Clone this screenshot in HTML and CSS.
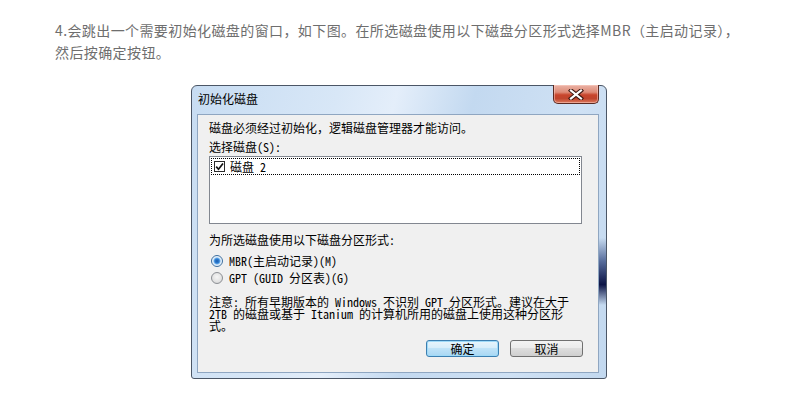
FILE: index.html
```html
<!DOCTYPE html>
<html>

<head>
    <meta charset="UTF-8">
    <link rel="stylesheet" href="styles.css">
</head>

<body>
    <div class="page">
        <p class="intro">4.会跳出一个需要初始化磁盘的窗口，如下图。在所选磁盘使用以下磁盘分区形式选择MBR（主启动记录），<br>然后按确定按钮。</p>

        <div class="window">
            <div class="titlebar">
                <span class="title">初始化磁盘</span>
                <span class="close">
                    <svg width="16" height="11" viewBox="0 0 16 11">
                        <path d="M3 1.5 L13 9.5 M13 1.5 L3 9.5" stroke="#3a1610" stroke-width="4.2" stroke-linecap="square" fill="none" />
                        <path d="M3 1.5 L13 9.5 M13 1.5 L3 9.5" stroke="#ffffff" stroke-width="2.2" stroke-linecap="square" fill="none" />
                    </svg>
                </span>
            </div>
            <div class="client">
                <p class="msg">磁盘必须经过初始化，逻辑磁盘管理器才能访问。</p>
                <p class="label">选择磁盘(S):</p>
                <div class="listbox">
                    <div class="list-item">
                        <span class="checkbox">
                            <svg width="9" height="9" viewBox="0 0 9 9">
                                <path d="M1.2 4.6 L3.5 7.2 L8 1.5" stroke="#111" stroke-width="1.7" fill="none" />
                            </svg>
                        </span>
                        <span class="item-text">磁盘 2</span>
                    </div>
                </div>
                <p class="label label-scheme">为所选磁盘使用以下磁盘分区形式:</p>
                <div class="radios">
                    <div class="radio-row"><span class="radio checked"></span>MBR(主启动记录)(M)</div>
                    <div class="radio-row"><span class="radio"></span>GPT (GUID 分区表)(G)</div>
                </div>
                <div class="note">
                    <p class="note-line">注意: 所有早期版本的 Windows 不识别 GPT 分区形式。建议在大于</p>
                    <p class="note-line">2TB 的磁盘或基于 Itanium 的计算机所用的磁盘上使用这种分区形</p>
                    <p class="note-line">式。</p>
                </div>
                <div class="buttons">
                    <span class="btn btn-default">确定</span>
                    <span class="btn">取消</span>
                </div>
            </div>
        </div>
    </div>
</body>

</html>
```

FILE: styles.css
```css
body {
    margin: 0;
    background: #ffffff;
}

.page {
    padding-top: 19px;
}

.intro {
    margin: 0 0 0 55px;
    font-family: "Noto Sans CJK SC", sans-serif;
    font-size: 14px;
    line-height: 22px;
    letter-spacing: 0.4px;
    color: #6e6e6e;
}

.window {
    box-sizing: border-box;
    width: 416px;
    height: 294px;
    margin: 22px 0 0 191px;
    padding: 0 7px 5px 5px;
    border: 1px solid #4b5666;
    border-radius: 6px 6px 3px 3px;
    background:
        linear-gradient(to bottom, rgba(12, 20, 70, 0) 0%, rgba(12, 20, 70, 0) 52%, rgba(40, 62, 120, 0.7) 60%, #0c1446 68%, rgba(12, 20, 70, 0) 75%) no-repeat right top / 7px 100%,
        linear-gradient(105deg, #c7dcf2 0%, #d8e7f7 30%, #e4eefa 42%, #c3d9f0 58%, #cfe1f4 80%, #c2d8ef 100%);
    font-family: "Noto Sans Mono CJK SC", "Noto Sans CJK SC", sans-serif;
    font-size: 12px;
    color: #000000;
}

.titlebar {
    display: flex;
    align-items: flex-start;
    height: 28px;
}

.title {
    padding: 6px 0 0 1px;
    line-height: 14px;
}

.close {
    display: flex;
    align-items: center;
    justify-content: center;
    box-sizing: border-box;
    width: 46px;
    height: 19px;
    margin: -1px 0 0 auto;
    border: 1px solid #5a2a22;
    border-top: none;
    border-radius: 0 0 5px 5px;
    background: linear-gradient(to bottom, #eab3a6 0%, #de8b77 40%, #c8452c 55%, #c0452d 75%, #dc7a5e 100%);
    box-shadow: inset 0 0 0 1px rgba(255, 210, 200, 0.5);
}

.client {
    box-sizing: border-box;
    height: 259px;
    padding: 0 16px 0 11px;
    border: 1px solid #8fa6c1;
    background: #f0f0f0;
}

.msg,
.label,
.note-line {
    margin: 0;
    line-height: 12px;
    white-space: nowrap;
}

.msg {
    margin-top: 7px;
}

.label {
    margin-top: 7px;
}

.listbox {
    box-sizing: border-box;
    height: 68px;
    margin-top: 3px;
    padding: 1px;
    border: 1px solid #828790;
    background: #ffffff;
}

.list-item {
    display: flex;
    align-items: center;
    box-sizing: border-box;
    height: 17px;
    border: 1px dotted #000000;
}

.checkbox {
    display: flex;
    align-items: center;
    justify-content: center;
    box-sizing: border-box;
    width: 11px;
    height: 11px;
    margin-left: 2px;
    border: 1px solid #2b2b2b;
    background: #ffffff;
}

.item-text {
    margin-left: 5px;
    line-height: 12px;
}

.label-scheme {
    margin-top: 10px;
}

.radios {
    margin-top: 6px;
}

.radio-row {
    display: flex;
    align-items: center;
    height: 17px;
    line-height: 12px;
}

.radio {
    box-sizing: border-box;
    width: 12px;
    height: 12px;
    margin: 0 6px 0 2px;
    border: 1px solid #8c8f94;
    border-radius: 50%;
    background: radial-gradient(circle at 50% 40%, #f6f6f6 0%, #e2e2e2 60%, #cdcdcd 100%);
}

.radio.checked {
    border-color: #3d6e9e;
    background: radial-gradient(circle, #1a5cab 0%, #2f7fd4 2.2px, #6fb0ea 3px, #cfe5f8 3.8px, #f4f9fe 5px);
}

.note {
    margin-top: 10px;
}

.buttons {
    display: flex;
    justify-content: flex-end;
    gap: 11px;
    margin: 8px -1px 0 0;
}

.btn {
    box-sizing: border-box;
    width: 73px;
    height: 17px;
    border: 1px solid #707070;
    border-radius: 3px;
    background: linear-gradient(to bottom, #f3f3f3 0%, #ebebeb 50%, #dddddd 50%, #cfcfcf 100%);
    text-align: center;
    line-height: 15px;
}

.btn-default {
    border-color: #3c7fb1;
    background: linear-gradient(to bottom, #e8f5fc 0%, #d6edfa 50%, #bfe3f8 50%, #a9d7f3 100%);
    box-shadow: inset 0 0 0 1px #9fdaf8;
}
```
